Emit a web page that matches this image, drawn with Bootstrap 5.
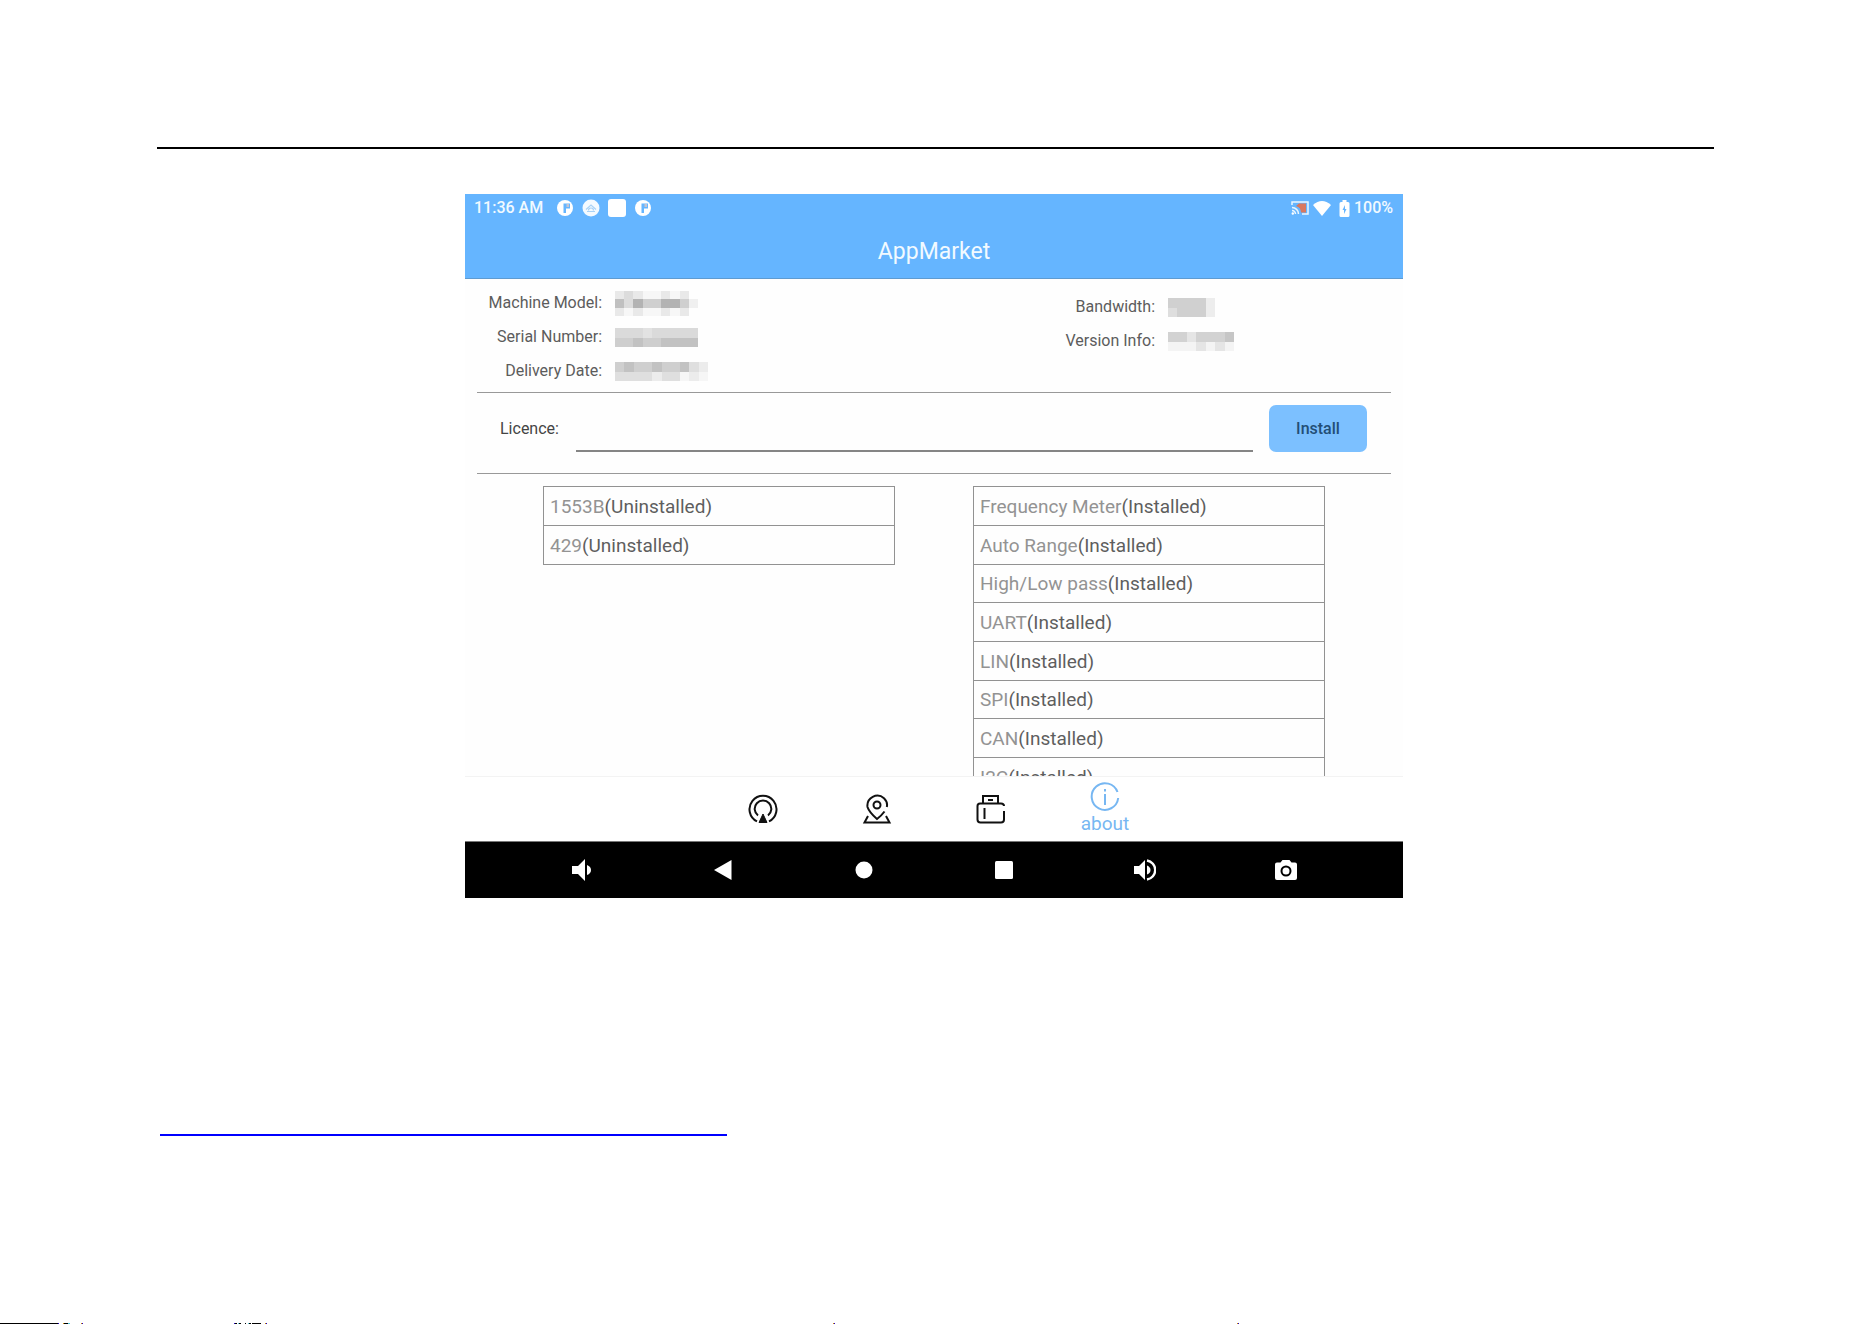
<!DOCTYPE html>
<html lang="en">
<head>
<meta charset="utf-8">
<meta name="viewport" content="width=device-width, initial-scale=1">
<title>AppMarket</title>
<link rel="stylesheet" href="https://cdn.jsdelivr.net/npm/bootstrap@5.3.0/dist/css/bootstrap.min.css">
<style>
body { font-family: Roboto, "Liberation Sans", sans-serif; background: #fff; color: #555; }
svg { display: block; flex: none; }
.sheet { padding: 147px 158px 0 157px; }
.sheet-rule { border-top: 2px solid #000; margin-bottom: 45px; }
.figure-wrap { padding-right: 3px; }
.device { max-width: 938px; background: #fefefe; }
.top-area { background: #65b5ff; border-bottom: 1px solid #5f9bd0; color: #f2faff; height: 85px; }
.status-line { font-size: 16px; line-height: 20px; font-weight: 500; padding: 4px 10px 0 9px; }
.status-icons { gap: 8px; margin-left: 13px; }
.app-title { font-size: 23px; line-height: 32px; margin: 18px 0 0; font-weight: 400; color: #f2faff; }
.inset { margin: 0 12px; }
.info-area { height: 114px; padding-top: 7px; border-bottom: 1px solid #999; font-size: 16px; color: #5c5c5c; }
.info-line { height: 34px; display: flex; align-items: center; gap: 13px; }
.info-name { width: 125px; text-align: right; }
.info-right { padding-top: 4px; margin-right: 157px; }
.licence-area { height: 81px; border-bottom: 1px solid #999; padding: 12px 24px 0 23px; font-size: 16px; color: #444; }
.licence-area label { line-height: 24px; margin-top: 12px; }
.licence-box { height: 47px; border: 0; border-bottom: 2px solid #858585; margin: 0 16px 0 17px; background: transparent; min-width: 0; outline: 0; }
.install-btn { width: 98px; height: 47px; background: #7cc0ff; color: #234e76; border: 0; border-radius: 7px; font-size: 16px; font-weight: 500; padding: 0; }
.lists { height: 302px; overflow: hidden; padding: 12px 78px 0; gap: 78px; }
.opt-table { width: 100%; border-collapse: collapse; font-size: 19px; line-height: 28px; color: #5e5e5e; }
.opt-table td { border: 1px solid #929292; height: 39px; padding: 1px 6px 0; }
.opt-table tr:nth-child(3n) td { height: 38px; }
.opt-table span { color: #939393; }
.tabs-bar { height: 65px; border-top: 1px solid #f3f3f3; background: #fff; }
.tab-btn { width: 114px; border: 0; background: none; padding: 0; color: #111; font-size: 19px; line-height: 24px; }
.tab-btn.active { color: #77b7f2; }
.sys-bar { height: 57px; background: #000; border-top: 1px solid #777; padding: 0 47px; }
.sys-bar button { flex: 1 1 0; border: 0; background: none; padding: 0; color: #fff; }
.doc-link { display: block; max-width: 567px; height: 2px; background: #0000ff; margin: 236px 0 0 3px; }
</style>
<script src="https://cdn.jsdelivr.net/npm/bootstrap@5.3.0/dist/js/bootstrap.bundle.min.js"></script>
</head>
<body class="d-flex flex-column min-vh-100">
<main class="sheet">
  <div class="sheet-rule"></div>
  <div class="figure-wrap">
  <section class="device mx-auto">
    <header class="top-area">
      <div class="status-line d-flex justify-content-between">
        <div class="d-flex align-items-center">
          <span>11:36 AM</span>
          <div class="status-icons d-flex align-items-center">
            <svg width="18" height="18" viewBox="0 0 18 18"><circle cx="9" cy="9" r="8" fill="#fff"/><path d="M7.500 4.500H14V9.500H10V14H7.500z" fill="#65b5ff"/><path d="M10.500 5h2.500v3h-2.500z" fill="#c3c4d2"/></svg>
            <svg width="18" height="18" viewBox="0 0 18 18"><circle cx="9" cy="9" r="8.500" fill="#f4faff"/><path d="M4 10.500 9 6l5 4.500M6.500 11.500a2.500 2.500 0 0 1 5 0M5 12.500h8" fill="none" stroke="#a9d2f6" stroke-width="1.200"/></svg>
            <svg width="18" height="18" viewBox="0 0 18 18"><rect width="18" height="18" rx="3" fill="#fff"/></svg>
            <svg width="18" height="18" viewBox="0 0 18 18"><circle cx="9" cy="9" r="8" fill="#fff"/><path d="M7.500 4.500H14V9.500H10V14H7.500z" fill="#65b5ff"/><path d="M10.500 5h2.500v3h-2.500z" fill="#c3c4d2"/></svg>
          </div>
        </div>
        <div class="d-flex align-items-center gap-1">
          <svg width="18" height="16" viewBox="0 0 18 16"><path d="M8 3.500h7v9H10A7 7 0 0 0 5 6z" fill="#d9785f"/><path d="M1 5V2h16v12h-6M1 7.500A6.500 6.500 0 0 1 7.500 14M1 10.500A3.500 3.500 0 0 1 4.500 14" fill="none" stroke="#eaf6ff" stroke-width="1.500"/><circle cx="1.800" cy="13.500" r="1.200" fill="#fff"/></svg>
          <svg width="18" height="15" viewBox="0 0 18 15"><path d="M0 4Q9-4 18 4L9 15z" fill="#fff"/></svg>
          <svg class="ms-1" width="11" height="17" viewBox="0 0 11 17"><path d="M3.500 0h4v2H9q1.500 0 1.500 1.500v12Q10.500 17 9 17H2Q.5 17 .5 15.500v-12Q.5 2 2 2h1.500z" fill="#fff"/><path d="M6 5 3.500 10H5v4l2.500-5H6z" fill="#65b5ff"/></svg>
          <span>100%</span>
        </div>
      </div>
      <h1 class="app-title text-center">AppMarket</h1>
    </header>

    <div class="inset info-area d-flex justify-content-between">
      <div>
        <div class="info-line"><span class="info-name">Machine Model:</span>
          <svg width="83" height="25" viewBox="0 0 9 3" preserveAspectRatio="none" shape-rendering="crispEdges"><path fill="#f7f7f7" d="M0 0h8v3H0z"/><path fill="#e9e9e9" d="M0 0h1v1H0zM2 0h1v1H2zM5 0h1v1H5zM7 0h1v1H7zM0 2h1v1H0zM2 2h1v1H2zM5 2h1v1H5zM7 2h1v1H7z"/><path fill="#dcdcdc" d="M1 0h1v2H1z"/><path fill="#c0c0c0" d="M0 1h1v1H0z"/><path fill="#b3b3b3" d="M2 1h1v1H2zM5 1h2v1H5z"/><path fill="#cfcfcf" d="M3 1h2v1H3zM7 1h1v1H7z"/><path fill="#f0f0f0" d="M8 1h1v1H8z"/></svg></div>
        <div class="info-line"><span class="info-name">Serial Number:</span>
          <svg width="83" height="19" viewBox="0 0 9 2" preserveAspectRatio="none" shape-rendering="crispEdges"><path fill="#dadada" d="M0 0h9v1H0z"/><path fill="#e2e2e2" d="M3 0h1v1H3z"/><path fill="#cecece" d="M0 1h5v1H0z"/><path fill="#c2c2c2" d="M2 1h1v1H2zM5 1h4v1H5z"/></svg></div>
        <div class="info-line"><span class="info-name">Delivery Date:</span>
          <svg width="93" height="19" viewBox="0 0 10 2" preserveAspectRatio="none" shape-rendering="crispEdges"><path fill="#cfcfcf" d="M0 0h8v1H0z"/><path fill="#c2c2c2" d="M1 0h1v1H1zM4 0h1v1H4zM7 0h1v1H7z"/><path fill="#dfdfdf" d="M8 0h1v1H8zM0 1h4v1H0zM5 1h2v1H5z"/><path fill="#ececec" d="M9 0h1v1H9zM4 1h1v1H4zM8 1h1v1H8z"/><path fill="#f6f6f6" d="M7 1h1v1H7zM9 1h1v1H9z"/></svg></div>
      </div>
      <div class="info-right">
        <div class="info-line"><span class="info-name">Bandwidth:</span>
          <svg width="47" height="19" viewBox="0 0 5 2" preserveAspectRatio="none" shape-rendering="crispEdges"><path fill="#d0d0d0" d="M0 0h4v2H0z"/><path fill="#dedede" d="M0 1h1v1H0z"/><path fill="#ededed" d="M4 0h1v2H4z"/></svg></div>
        <div class="info-line"><span class="info-name">Version Info:</span>
          <svg width="66" height="19" viewBox="0 0 7 2" preserveAspectRatio="none" shape-rendering="crispEdges"><path fill="#d2d2d2" d="M0 0h6v1H0z"/><path fill="#e5e5e5" d="M2 0h1v1H2zM3 1h1v1H3zM5 1h1v1H5z"/><path fill="#c6c6c6" d="M6 0h1v1H6z"/><path fill="#f4f4f4" d="M0 1h3v1H0zM4 1h1v1H4zM6 1h1v1H6z"/></svg></div>
      </div>
    </div>

    <form class="inset licence-area d-flex align-items-start">
      <label for="licence">Licence:</label>
      <input id="licence" class="licence-box flex-grow-1" type="text">
      <button type="button" class="install-btn btn">Install</button>
    </form>

    <div class="lists d-flex align-items-start">
      <table class="opt-table">
        <tbody>
          <tr><td><span>1553B</span>(Uninstalled)</td></tr>
          <tr><td><span>429</span>(Uninstalled)</td></tr>
        </tbody>
      </table>
      <table class="opt-table">
        <tbody>
          <tr><td><span>Frequency Meter</span>(Installed)</td></tr>
          <tr><td><span>Auto Range</span>(Installed)</td></tr>
          <tr><td><span>High/Low pass</span>(Installed)</td></tr>
          <tr><td><span>UART</span>(Installed)</td></tr>
          <tr><td><span>LIN</span>(Installed)</td></tr>
          <tr><td><span>SPI</span>(Installed)</td></tr>
          <tr><td><span>CAN</span>(Installed)</td></tr>
          <tr><td><span>I2C</span>(Installed)</td></tr>
        </tbody>
      </table>
    </div>

    <nav class="tabs-bar d-flex justify-content-center" aria-label="Sections">
      <button type="button" class="tab-btn d-flex flex-column align-items-center justify-content-center" aria-label="Sampling">
        <svg width="30" height="30" viewBox="0 0 30 30" fill="none" stroke="currentColor" stroke-width="2"><path d="M9 27.400A13.500 13.500 0 1 1 21 27.400"/><path d="M10 21.500A8.300 8.300 0 1 1 20 21.500"/><path d="M15 20 19 28.500H11z" fill="currentColor" stroke-width="1"/></svg>
      </button>
      <button type="button" class="tab-btn d-flex flex-column align-items-center justify-content-center" aria-label="Location">
        <svg width="30" height="30" viewBox="0 0 30 30" fill="none" stroke="currentColor" stroke-width="2"><circle cx="15" cy="11" r="3.500"/><path d="M24.800 13Q26 8 22 4.200A10 10 0 0 0 5.500 13Q7 18 15 25Q20 21 22.500 17.500"/><path d="M6 22 2.500 28.500H27.500L24 22"/></svg>
      </button>
      <button type="button" class="tab-btn d-flex flex-column align-items-center justify-content-center" aria-label="Storage">
        <svg width="30" height="30" viewBox="0 0 30 30" fill="none" stroke="currentColor" stroke-width="2"><path d="M7 9V2H22V9M12 6h5"/><path d="M28 12Q28 9.500 25 9.500H4Q1.500 9.500 1.500 12V25.500Q1.500 28.500 4.500 28.500H25Q28 28.500 28 25.500V17"/><path d="M8.500 14V25"/></svg>
      </button>
      <button type="button" class="tab-btn active d-flex flex-column align-items-center justify-content-center">
        <svg width="30" height="30" viewBox="0 0 30 30" fill="none" stroke="currentColor" stroke-width="2"><path d="M27.500 10A13.300 13.300 0 1 0 28.200 16"/><path d="M15 12V23M15 7v2.500"/></svg>
        <span>about</span>
      </button>
    </nav>

    <div class="sys-bar d-flex" role="toolbar" aria-label="System keys">
      <button type="button" class="d-flex align-items-center justify-content-center" aria-label="Volume down"><svg width="22" height="24" viewBox="0 0 22 24" fill="currentColor"><path d="M1 8h6l7-7v22l-7-7H1zM16 7q4 1.500 4 5t-4 5z"/></svg></button>
      <button type="button" class="d-flex align-items-center justify-content-center" aria-label="Back"><svg width="18" height="20" viewBox="0 0 18 20" fill="currentColor"><path d="M17.500 0v20L0 10z"/></svg></button>
      <button type="button" class="d-flex align-items-center justify-content-center" aria-label="Home"><svg width="18" height="18" viewBox="0 0 18 18" fill="currentColor"><circle cx="9" cy="9" r="8.500"/></svg></button>
      <button type="button" class="d-flex align-items-center justify-content-center" aria-label="Recent apps"><svg width="18" height="18" viewBox="0 0 18 18" fill="currentColor"><rect width="18" height="18" rx="1.500"/></svg></button>
      <button type="button" class="d-flex align-items-center justify-content-center" aria-label="Volume up"><svg width="22" height="22" viewBox="0 0 22 22"><path d="M0 7h5l6-6v20l-6-6H0zM13 6.500q3.500 1.500 3.500 4.500T13 15.500z" fill="currentColor"/><path d="M13 1.500a9.600 9.600 0 0 1 0 19" fill="none" stroke="currentColor" stroke-width="2.400"/></svg></button>
      <button type="button" class="d-flex align-items-center justify-content-center" aria-label="Screenshot"><svg width="22" height="20" viewBox="0 0 22 20"><path d="M7.500 0h7l2 2.500H20q2 0 2 2V18q0 2-2 2H2q-2 0-2-2V4.500q0-2 2-2h3.500z" fill="currentColor"/><circle cx="11" cy="11" r="4.500" fill="none" stroke="#000" stroke-width="2"/></svg></button>
    </div>
  </section>
  </div>
  <a class="doc-link" href="#" aria-label="Document link"></a>
</main>
<footer class="mt-auto overflow-hidden">
  <svg width="1240" height="1" viewBox="0 0 1240 1" shape-rendering="crispEdges"><path fill="#000" d="M0 0h58v1H0zM64 0h4v1h-4zM235 0h2v1h-2zM239 0h2v1h-2zM245 0h1v1h-1zM249 0h2v1h-2zM252 0h9v1h-9z"/><path fill="#20c" d="M58 0h1v1h-1zM82 0h1v1h-1zM234 0h1v1h-1zM266 0h1v1h-1zM834 0h1v1h-1zM1238 0h1v1h-1z"/><path fill="#c80" d="M63 0h1v1h-1zM81 0h1v1h-1zM265 0h1v1h-1zM833 0h1v1h-1zM1237 0h1v1h-1z"/><path fill="#5cd" d="M68 0h2v1h-2zM238 0h1v1h-1zM248 0h1v1h-1z"/></svg>
</footer>
</body>
</html>
